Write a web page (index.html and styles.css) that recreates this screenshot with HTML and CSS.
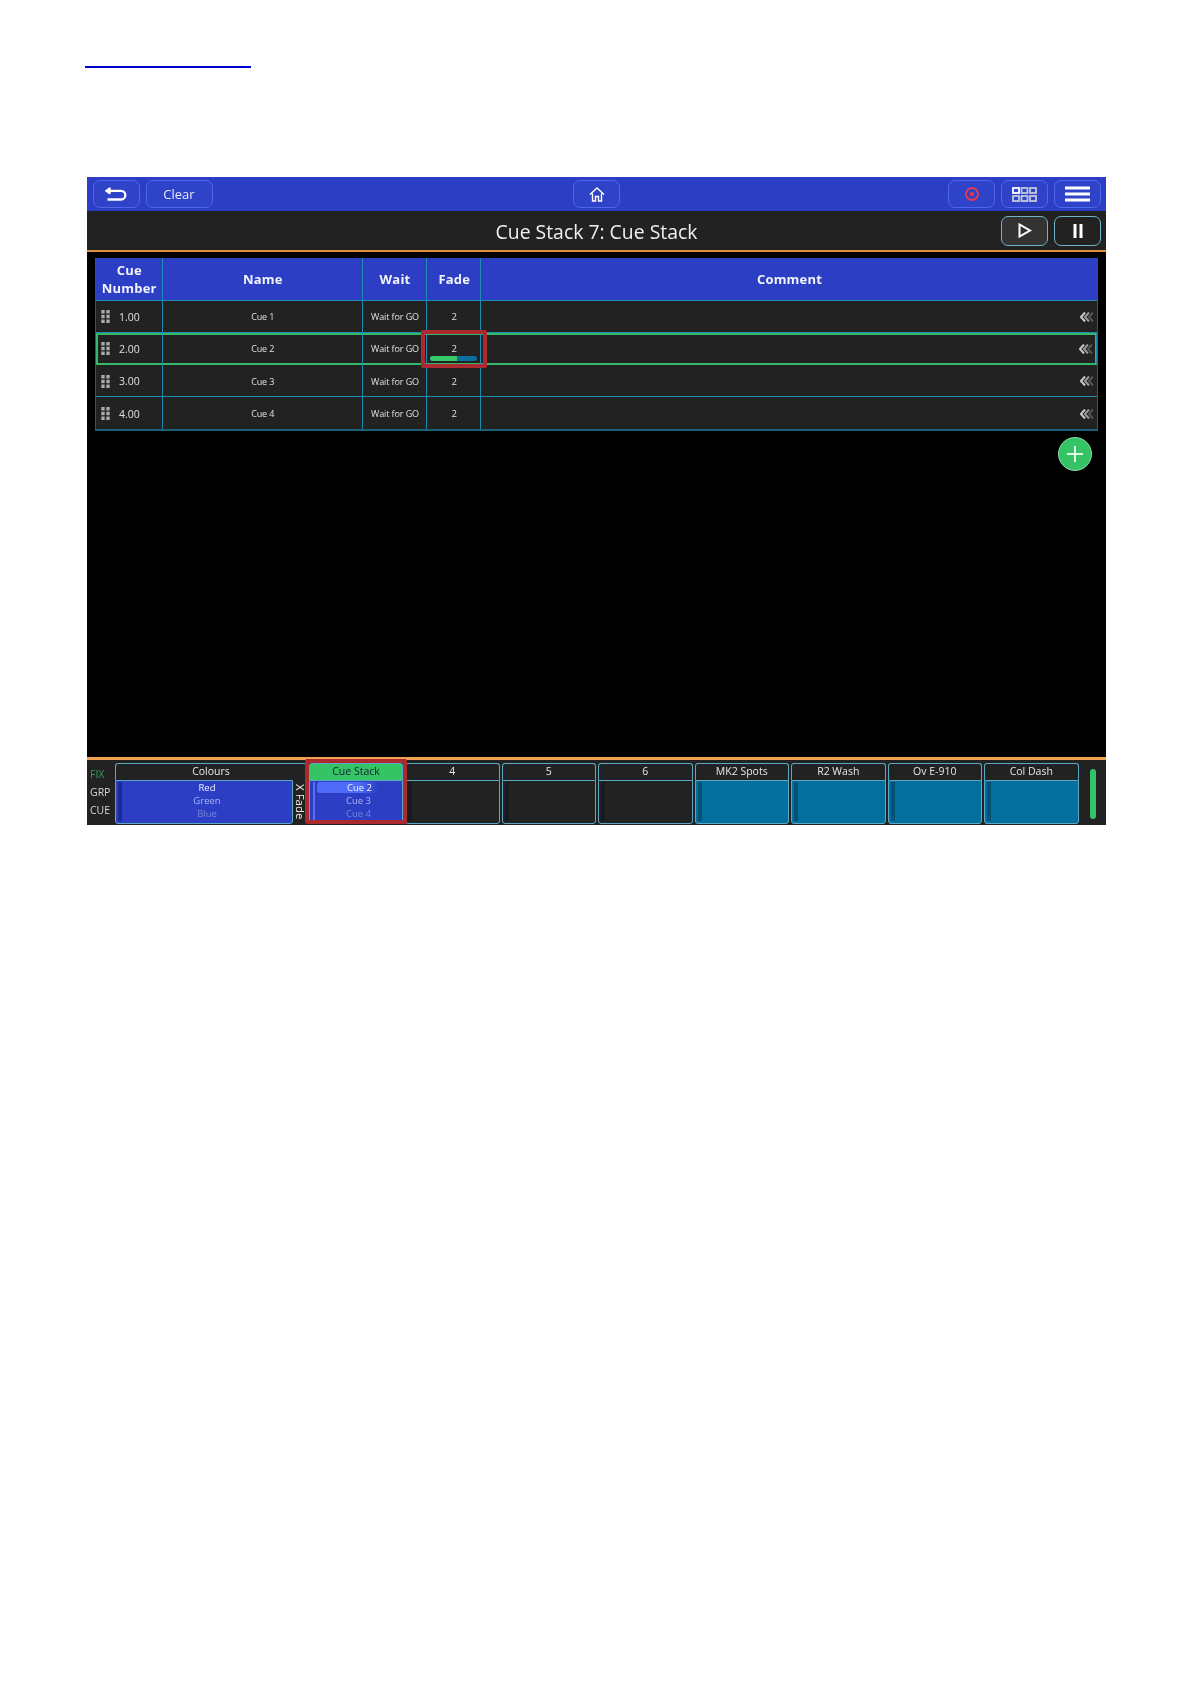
FILE: index.html
```html
<!DOCTYPE html>
<html lang="en">
<head>
<meta charset="utf-8">
<title>Cue Stack</title>
<link rel="stylesheet" href="styles.css">
</head>
<body>
<div class="doc-link"></div>
<div class="app">
  <header class="toolbar">
    <div class="tool-group">
      <button class="tbtn tbtn-icon"><svg width="22" height="14" viewBox="0 0 22 14"><path d="M5.500 1 1.500 3.800l4 2.800M2.500 3.800H16a4.300 4.300 0 0 1 0 8.700H2.500" fill="none" stroke="#fff" stroke-width="2.300"/></svg></button>
      <button class="tbtn tbtn-clear">Clear</button>
    </div>
    <button class="tbtn tbtn-icon"><svg width="16" height="15" viewBox="0 0 16 15"><path d="M1 7.500 8 1l7 6.500M3.500 6.500V14h3V9.500h3V14h3V6.500" fill="none" stroke="#fff" stroke-width="1.400"/></svg></button>
    <div class="tool-group tool-right">
      <button class="tbtn tbtn-icon tbtn-rec"><svg width="16" height="16" viewBox="0 0 16 16"><circle cx="8" cy="8" r="6" fill="none" stroke="#e5394e" stroke-width="1.800"/><circle cx="8" cy="8" r="2.200" fill="#e5394e"/></svg></button>
      <button class="tbtn tbtn-icon"><svg width="25" height="15" viewBox="0 0 25 15"><g fill="none" stroke="#c3c8dc" stroke-width="1.800"><rect x="1" y="1" width="6" height="5" stroke="#fff"/><rect x="9.500" y="1" width="6" height="5"/><rect x="18" y="1" width="6" height="5"/><rect x="1" y="9" width="6" height="5"/><rect x="9.500" y="9" width="6" height="5"/><rect x="18" y="9" width="6" height="5"/></g></svg></button>
      <button class="tbtn tbtn-icon"><svg width="25" height="16" viewBox="0 0 25 16"><path d="M0 2h25M0 8h25M0 14h25" stroke="#fff" stroke-width="3"/></svg></button>
    </div>
  </header>
  <div class="titlebar">
    <h1 class="title">Cue Stack 7: Cue Stack</h1>
    <div class="title-actions">
      <button class="pbtn pbtn-play"><svg width="14" height="15" viewBox="0 0 14 15"><path d="M1.500 1.500v12l10.500-6z" fill="none" stroke="#fff" stroke-width="2"/></svg></button>
      <button class="pbtn"><svg width="12" height="14" viewBox="0 0 12 14"><path d="M1.500 0h3v14h-3zM7.500 0h3v14h-3z" fill="#fff"/></svg></button>
    </div>
  </div>
  <main class="main">
    <div class="cue-table">
      <div class="row head">
        <div class="cell">Cue<br>Number</div><div class="cell">Name</div><div class="cell">Wait</div><div class="cell">Fade</div><div class="cell">Comment</div>
      </div>
      <div class="row">
        <div class="cell num"><svg class="grip" width="9" height="13" viewBox="0 0 9 13"><path d="M.3 0h3.400v3.400H.3zM5.300 0h3.400v3.400H5.300zM.3 4.800h3.400v3.400H.3zM5.300 4.800h3.400v3.400H5.300zM.3 9.600h3.400V13H.3zM5.300 9.600h3.400V13H5.300z" fill="#aaa"/></svg>1.00</div>
        <div class="cell small">Cue 1</div><div class="cell small">Wait for GO</div><div class="cell fade">2</div>
        <div class="cell comment"><svg class="chev" width="15" height="10" viewBox="0 0 15 10"><path d="M13 .5 9 5l4 4.500" stroke="#555"/><path d="M9 .5 5 5l4 4.500" stroke="#9a9a9a"/><path d="M5 .5 1 5l4 4.500" stroke="#c8c8c8"/></svg></div>
      </div>
      <div class="row active">
        <div class="cell num"><svg class="grip" width="9" height="13" viewBox="0 0 9 13"><path d="M.3 0h3.400v3.400H.3zM5.300 0h3.400v3.400H5.300zM.3 4.800h3.400v3.400H.3zM5.300 4.800h3.400v3.400H5.300zM.3 9.600h3.400V13H.3zM5.300 9.600h3.400V13H5.300z" fill="#aaa"/></svg>2.00</div>
        <div class="cell small">Cue 2</div><div class="cell small">Wait for GO</div>
        <div class="cell fade">2<div class="progress"><div class="progress-fill"></div></div></div>
        <div class="cell comment"><svg class="chev" width="15" height="10" viewBox="0 0 15 10"><path d="M13 .5 9 5l4 4.500" stroke="#555"/><path d="M9 .5 5 5l4 4.500" stroke="#9a9a9a"/><path d="M5 .5 1 5l4 4.500" stroke="#c8c8c8"/></svg></div>
        <div class="red-mark fade-mark"></div>
      </div>
      <div class="row">
        <div class="cell num"><svg class="grip" width="9" height="13" viewBox="0 0 9 13"><path d="M.3 0h3.400v3.400H.3zM5.300 0h3.400v3.400H5.300zM.3 4.800h3.400v3.400H.3zM5.300 4.800h3.400v3.400H5.300zM.3 9.600h3.400V13H.3zM5.300 9.600h3.400V13H5.300z" fill="#aaa"/></svg>3.00</div>
        <div class="cell small">Cue 3</div><div class="cell small">Wait for GO</div><div class="cell fade">2</div>
        <div class="cell comment"><svg class="chev" width="15" height="10" viewBox="0 0 15 10"><path d="M13 .5 9 5l4 4.500" stroke="#555"/><path d="M9 .5 5 5l4 4.500" stroke="#9a9a9a"/><path d="M5 .5 1 5l4 4.500" stroke="#c8c8c8"/></svg></div>
      </div>
      <div class="row">
        <div class="cell num"><svg class="grip" width="9" height="13" viewBox="0 0 9 13"><path d="M.3 0h3.400v3.400H.3zM5.300 0h3.400v3.400H5.300zM.3 4.800h3.400v3.400H.3zM5.300 4.800h3.400v3.400H5.300zM.3 9.600h3.400V13H.3zM5.300 9.600h3.400V13H5.300z" fill="#aaa"/></svg>4.00</div>
        <div class="cell small">Cue 4</div><div class="cell small">Wait for GO</div><div class="cell fade">2</div>
        <div class="cell comment"><svg class="chev" width="15" height="10" viewBox="0 0 15 10"><path d="M13 .5 9 5l4 4.500" stroke="#555"/><path d="M9 .5 5 5l4 4.500" stroke="#9a9a9a"/><path d="M5 .5 1 5l4 4.500" stroke="#c8c8c8"/></svg></div>
      </div>
    </div>
    <div class="add-wrap">
      <button class="add"><svg width="18" height="18" viewBox="0 0 18 18"><path d="M9 1v16M1 9h16" stroke="#e6f5ea" stroke-width="2"/></svg></button>
    </div>
  </main>
  <footer class="footer">
    <div class="modes">
      <div class="mode mode-on">FIX</div><div class="mode">GRP</div><div class="mode">CUE</div>
    </div>
    <div class="pb pb-wide">
      <div class="pb-head">Colours</div>
      <div class="pb-split">
        <div class="pb-body pb-blue">
          <div class="strip"></div>
          <div class="cues"><div class="cue c1">Red</div><div class="cue c2">Green</div><div class="cue c3">Blue</div></div>
        </div>
        <div class="xfade">X Fade</div>
      </div>
    </div>
    <div class="pb pb-stack">
      <div class="pb-head pb-head-on">Cue Stack</div>
      <div class="pb-body pb-blue">
        <div class="strip strip-light"></div>
        <div class="cues"><div class="cue c1 cue-on">Cue 2</div><div class="cue c2">Cue 3</div><div class="cue c3">Cue 4</div></div>
      </div>
      <div class="red-mark stack-mark"></div>
    </div>
    <div class="pb"><div class="pb-head">4</div><div class="pb-body"><div class="strip strip-dark"></div></div></div>
    <div class="pb"><div class="pb-head">5</div><div class="pb-body"><div class="strip strip-dark"></div></div></div>
    <div class="pb"><div class="pb-head">6</div><div class="pb-body"><div class="strip strip-dark"></div></div></div>
    <div class="pb"><div class="pb-head">MK2 Spots</div><div class="pb-body pb-teal"><div class="strip strip-teal"></div></div></div>
    <div class="pb"><div class="pb-head">R2 Wash</div><div class="pb-body pb-teal"><div class="strip strip-teal"></div></div></div>
    <div class="pb"><div class="pb-head">Ov E-910</div><div class="pb-body pb-teal"><div class="strip strip-teal"></div></div></div>
    <div class="pb"><div class="pb-head">Col Dash</div><div class="pb-body pb-teal"><div class="strip strip-teal"></div></div></div>
    <div class="level"></div>
  </footer>
</div>
</body>
</html>
```
FILE: styles.css
```css
* { box-sizing: border-box; }
html, body { margin: 0; padding: 0; background: #fff; }
body { height: 1684px; overflow: hidden; font-family: "Open Sans", "Liberation Sans", sans-serif; }
button { font: inherit; padding: 0; margin: 0; cursor: pointer; }

.doc-link { width: 166px; height: 2px; margin: 66px 0 0 85px; background: #0000cc; }

.app { width: 1019px; height: 645px; margin: 109px 0 0 87px; background: #000; display: flex; flex-direction: column; filter: blur(.35px); }

.toolbar { height: 34px; flex: none; background: #2b3ec4; display: grid; grid-template-columns: 1fr 47px 1fr; align-items: center; padding: 0 5.500px 0 6px; }
.tool-group { display: flex; gap: 6px; }
.tool-right { justify-content: flex-end; gap: 6.500px; }
.tbtn { height: 28px; width: 46.500px; background: #2f43c8; border: 1.500px solid #4f67ee; border-radius: 7px; color: #e4e7f5; display: flex; align-items: center; justify-content: center; }
.tbtn-rec svg { margin-left: 1px; }
.tbtn-clear { width: 67px; font-size: 13px; }

.titlebar { height: 39px; flex: none; background: #222; position: relative; display: flex; align-items: center; justify-content: flex-end; padding: 0 5px 0 0; }
.title { position: absolute; left: 0; right: 0; top: 7px; margin: 0; text-align: center; font-size: 19.400px; line-height: 27px; font-weight: 400; color: #f0f0f0; }
.title-actions { display: flex; gap: 6px; position: relative; }
.pbtn { width: 47px; height: 30px; background: #222; border: 1.500px solid #6fb5c9; border-radius: 7px; display: flex; align-items: center; justify-content: center; }
.pbtn-play { background: #333; }

.main { height: 507px; flex: none; background: #000; border-top: 2px solid #e0913f; padding: 5.500px 8.500px 0 7.500px; }

.cue-table { border: 1px solid #1c5f78; border-top: 0; }
.row { display: grid; grid-template-columns: 67px 200px 64.500px 54px 1fr; height: 32.300px; background: #222; position: relative; border-bottom: 1.300px solid #1f8bb0; color: #e0e0e0; }
.row:last-child { border-bottom-color: #1c5f78; }
.row.head { height: 43px; background: #2b3ec4; color: #f2f4fb; font-weight: 700; font-size: 13px; line-height: 18px; letter-spacing: .2px; }
.row.head .cell { padding-top: 0; }
.row.active { outline: 2.500px solid #35b869; outline-offset: -2px; border-bottom-color: transparent; }
.cell { display: flex; align-items: center; justify-content: center; text-align: center; border-right: 1.300px solid #1f8bb0; position: relative; min-width: 0; padding-top: 1px; padding-left: 1.500px; }
.cell:last-child { border-right: 0; }
.small { font-size: 9px; letter-spacing: -.1px; }
.fade { font-size: 9.500px; }
.num { justify-content: flex-start; font-size: 10.500px; padding-left: 5.500px; }
.grip { margin-right: 9px; flex: none; }
.comment { justify-content: flex-end; padding-right: 2px; }
.chev path { fill: none; stroke-width: 2; }

.progress { position: absolute; left: 2.500px; right: 3px; bottom: 3.500px; height: 4.500px; border-radius: 3px; background: #0a6f9e; overflow: hidden; }
.progress-fill { width: 58%; height: 100%; background: #35c969; }

.red-mark { position: absolute; border: 4.500px solid #aa2a30; border-radius: 2px; pointer-events: none; z-index: 3; }
.fade-mark { left: 325px; top: -3px; width: 66px; height: 38.500px; }

.add-wrap { display: flex; justify-content: flex-end; padding: 6px 5.500px 0 0; }
.add { width: 34px; height: 34px; border: 1px solid #8bd8a5; border-radius: 50%; background: #35c465; display: flex; align-items: center; justify-content: center; }

.footer { flex: 1; background: #222; border-top: 3.500px solid #f0a250; display: flex; align-items: stretch; gap: 2px; padding: 3px 0 1px 0; position: relative; }
.modes { width: 25px; margin-right: 1px; padding: 2px 0 0 3px; display: flex; flex-direction: column; gap: 0; font-size: 10.500px; line-height: 18px; color: #d5d5d5; border-right: 0; }
.mode-on { color: #2f9e5a; }
.pb { width: 94.500px; display: flex; flex-direction: column; position: relative; }
.pb-wide { width: 192px; }
.pb-stack { width: 94px; }
.pb-head { height: 17px; flex: none; background: #222; border: 1.300px solid #5aa8c4; border-bottom: 0; border-radius: 3px 3px 0 0; color: #e6e6e6; font-size: 10.500px; line-height: 15px; text-align: center; }
.pb-head-on { background: #35c465; color: #123; }
.pb-body { flex: 1; display: flex; background: #222; border: 1.300px solid #5aa8c4; border-radius: 0 0 3px 3px; padding: 1px 0 2px 2px; min-width: 0; }
.pb-blue { background: #2b3ec4; }
.pb-teal { background: #056f9d; }
.strip { width: 4px; flex: none; background: #1c2b8f; }
.strip-light { width: 2px; margin-left: 1px; background: #5a70e8; }
.strip-dark { background: #1a1a1a; }
.strip-teal { background: #045377; }
.pb-split { flex: 1; display: flex; min-height: 0; }
.pb-split .pb-body { flex: 1; }
.xfade { width: 14px; flex: none; writing-mode: vertical-rl; font-size: 11.500px; line-height: 14px; text-align: center; color: #eee; background: #222; }
.cues { flex: 1; display: flex; flex-direction: column; min-width: 0; }
.cue { height: 13px; font-size: 9.500px; line-height: 12px; text-align: center; }
.c1 { color: #f0f2ff; }
.c2 { color: #a8b4f2; }
.c3 { color: #7585de; }
.cue-on { height: 11px; line-height: 11px; margin-left: 2px; margin-bottom: 2px; border-radius: 3px; background: linear-gradient(90deg, #4e6cf8 0%, #4e6cf8 50%, #2b3ec4 72%); }
.stack-mark { left: -4px; right: -4px; top: -4.500px; bottom: 0; }
.level { position: absolute; left: 1002.500px; top: 9px; width: 6.500px; height: 50px; border-radius: 3px; background: #35c465; }
```
